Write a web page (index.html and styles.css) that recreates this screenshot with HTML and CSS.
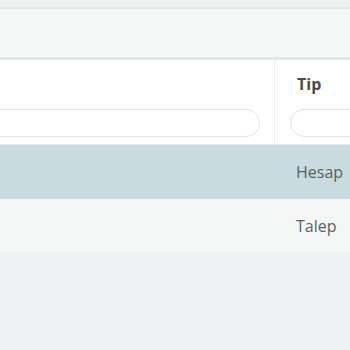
FILE: index.html
```html
<!DOCTYPE html>
<html lang="tr">
<head>
  <meta charset="UTF-8" />
  <title>Liste</title>
  <link rel="stylesheet" href="styles.css">
</head>
<body>
  <div class="topbar"></div>
  <div class="toolbar"></div>
  <div class="grid">
    <div class="grid-head">
      <div class="col col-main">
        <div class="col-title"></div>
        <input class="filter" type="text" />
      </div>
      <div class="col col-tip">
        <div class="col-title">Tip</div>
        <input class="filter" type="text" />
      </div>
    </div>
    <div class="row selected">
      <div class="cell cell-main"></div>
      <div class="cell cell-tip">Hesap</div>
    </div>
    <div class="row">
      <div class="cell cell-main"></div>
      <div class="cell cell-tip">Talep</div>
    </div>
  </div>
</body>
</html>
```

FILE: styles.css
```css
body {
  margin: 0;
  background: #eef1f2;
  font-family: "Open Sans", sans-serif;
  color: #5a5f61;
  overflow: hidden;
}

.topbar {
  height: 7px;
  background: #eef0f1;
  border-bottom: 2px solid #e3e6e7;
}

.toolbar {
  height: 48px;
  background: #f5f7f7;
  border-bottom: 3px solid #e4e7e8;
}

.grid {
  overflow: hidden;
}

.grid-head {
  display: flex;
  background: #fff;
  border-bottom: 1px solid #e8ecec;
}

.col {
  display: flex;
  flex-direction: column;
  padding-bottom: 7px;
  flex: none;
}

.col-main {
  width: 275px;
  border-right: 1px solid #eceeee;
  box-sizing: border-box;
}

.col-main .filter {
  width: 280px;
  margin-left: -20px;
}

.col-tip {
  padding-left: 15px;
}

.col-tip .filter {
  width: 120px;
}

.col-title {
  height: 49px;
  line-height: 48px;
  font-size: 16px;
  font-weight: bold;
  color: #474b4d;
  padding-left: 7px;
}

.filter {
  height: 28px;
  box-sizing: border-box;
  border: 1px solid #e2e5e6;
  border-radius: 14px;
  background: #fff;
  margin: 0;
  outline: none;
}

.row {
  display: flex;
  height: 53px;
  background: #f5f7f7;
  align-items: center;
}

.row.selected {
  background: #c9dbdf;
  height: 54px;
}

.cell {
  font-size: 16px;
}

.cell-main {
  width: 276px;
  flex: none;
}

.cell-tip {
  padding-left: 20px;
  white-space: nowrap;
}
```
